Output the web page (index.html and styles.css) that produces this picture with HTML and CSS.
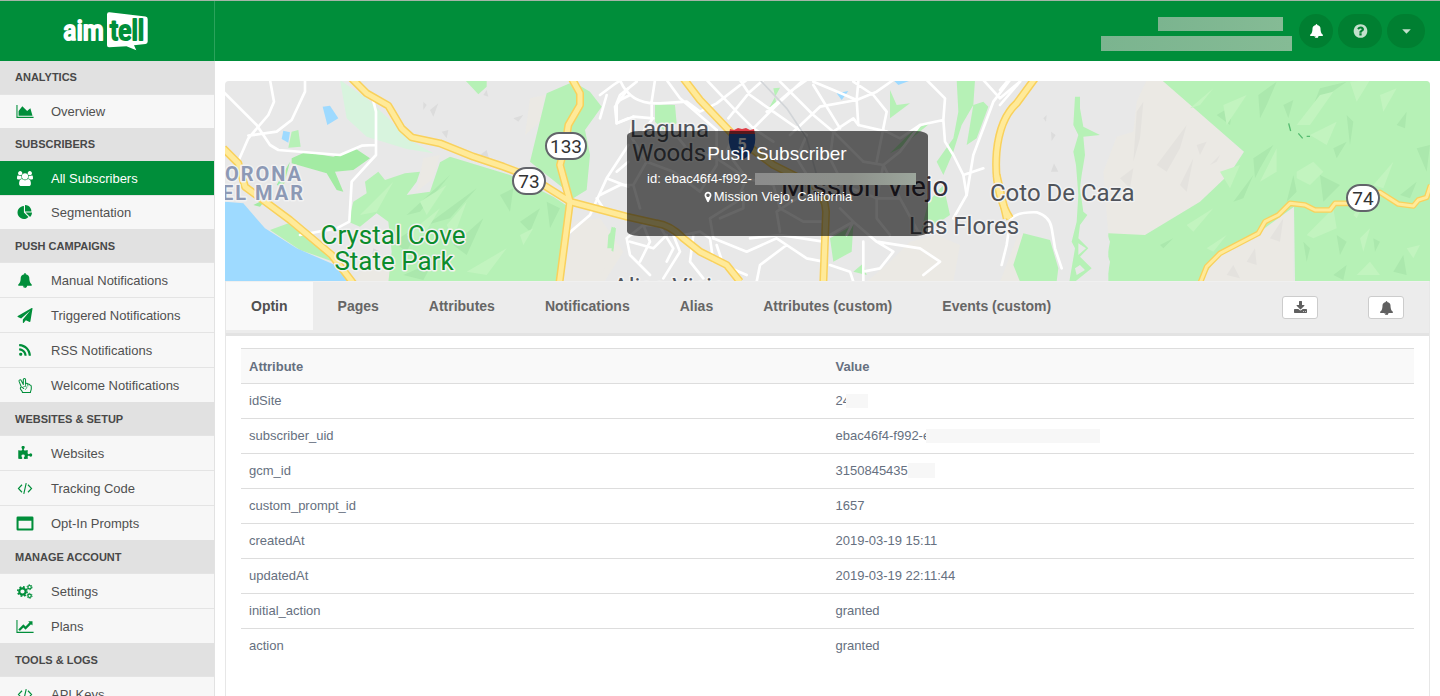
FILE: index.html
```html
<!DOCTYPE html>
<html lang="en">
<head>
<meta charset="utf-8">
<title>Aimtell - Push Subscriber</title>
<link rel="stylesheet" href="styles.css">
</head>
<body>
<svg class="sprite" aria-hidden="true">
  <symbol id="i-area" viewBox="0 0 2048 1792"><path d="M2048 1536v128h-2048v-1536h128v1408h1920zm-384-1024l256 896h-1664v-576l448-576 576 576z"/></symbol>
  <symbol id="i-users" viewBox="0 0 1920 1792"><path d="M593 896q-162 5-265 128h-134q-82 0-138-40.5t-56-118.5q0-353 124-353 6 0 43.5 21t97.5 42.5 119 21.5q67 0 133-23-5 37-5 66 0 139 81 256zm1071 637q0 120-73 189.5t-194 69.5h-874q-121 0-194-69.5t-73-189.5q0-53 3.5-103.5t14-109 26.5-108.5 43-97.5 62-81 85.5-53.5 111.5-20q10 0 43 21.5t73 48 107 48 135 21.5 135-21.5 107-48 73-48 43-21.5q61 0 111.5 20t85.5 53.5 62 81 43 97.5 26.5 108.5 14 109 3.5 103.5zm-1024-1277q0 106-75 181t-181 75-181-75-75-181 75-181 181-75 181 75 75 181zm704 384q0 159-112.5 271.5t-271.5 112.5-271.5-112.5-112.5-271.5 112.5-271.5 271.5-112.5 271.5 112.5 112.5 271.5zm576 225q0 78-56 118.5t-138 40.5h-134q-103-123-265-128 81-117 81-256 0-29-5-66 66 23 133 23 59 0 119-21.5t97.5-42.5 43.5-21q124 0 124 353zm-128-609q0 106-75 181t-181 75-181-75-75-181 75-181 181-75 181 75 75 181z"/></symbol>
  <symbol id="i-pie" viewBox="0 0 1792 1792"><path d="M768 890l546 546q-106 108-247.500 168t-298.500 60q-209 0-385.500-103t-279.500-279.500-103-385.500 103-385.500 279.500-279.500 385.500-103v762zm187 6h773q0 157-60 298.500t-168 247.500zm709-128h-768v-768q209 0 385.500 103t279.500 279.500 103 385.500z"/></symbol>
  <symbol id="i-bell" viewBox="0 0 1792 1792"><path d="M912 1696q0-16-16-16-59 0-101.500-42.500t-42.500-101.500q0-16-16-16t-16 16q0 73 51.500 124.500t124.500 51.500q16 0 16-16zm816-288q0 52-38 90t-90 38h-448q0 106-75 181t-181 75-181-75-75-181h-448q-52 0-90-38t-38-90q50-42 91-88t85-119.500 74.500-158.500 50-206 19.500-260q0-152 117-282.500t307-158.500q-8-19-8-39 0-40 28-68t68-28 68 28 28 68q0 20-8 39 190 28 307 158.500t117 282.500q0 139 19.500 260t50 206 74.500 158.500 85 119.500 91 88z"/></symbol>
  <symbol id="i-plane" viewBox="0 0 1792 1792"><path d="M1764 11q33 24 27 64l-256 1536q-5 29-32 45-14 8-31 8-11 0-24-5l-453-185-242 295q-18 23-49 23-13 0-22-4-19-7-30.500-23.500t-11.500-36.500v-349l864-1059-1069 925-395-162q-37-14-40-55-2-40 32-59l1664-960q15-9 32-9 20 0 36 11z"/></symbol>
  <symbol id="i-rss" viewBox="0 0 1792 1792"><path d="M576 1344q0 80-56 136t-136 56-136-56-56-136 56-136 136-56 136 56 56 136zm512 123q2 28-17 48-18 21-47 21h-135q-25 0-43-16.500t-20-41.500q-22-229-184.500-391.500t-391.500-184.500q-25-2-41.500-20t-16.500-43v-135q0-29 21-47 17-17 43-17h5q160 13 306 80.500t259 181.500q114 113 181.500 259t80.500 306zm512 2q2 27-18 47-18 20-46 20h-143q-26 0-44.500-17.500t-19.500-42.500q-12-215-101-408.500t-231.500-336-336-231.500-408.500-102q-25-1-42.500-19.500t-17.500-43.500v-143q0-28 20-46 18-18 44-18h3q262 13 501.500 120t425.500 294q187 186 294 425.500t120 501.500z"/></symbol>
  <symbol id="i-peace" viewBox="0 0 16 16"><g fill="none" stroke="currentColor" stroke-width="1.100" stroke-linejoin="round" stroke-linecap="round"><path d="M4 9.500 1.700 3.600C1.200 2 3.300 1.200 4 2.700L6.200 7V1.800c0-1.600 2.400-1.600 2.400 0v4.500c.8-1 2.200-.8 2.400.4 1-.5 2-.1 2.200.8 1 0 1.500.7 1.500 1.500v2.400c0 1.600-.9 2.400-.9 4H5.300c0-1.700-2.300-2.600-2.300-4.500 0-.9.300-1.400 1-1.400 1 0 1.700.9 2.600 1.700"/><path stroke-width=".8" d="M8.600 6.300v2M11 7v1.600M6.500 9.300c1.500-.7 3-.5 3.300.6.200.9-.8 1.400-1.300 2.300"/></g></symbol>
  <symbol id="i-puzzle" viewBox="0 0 1792 1792"><path d="M1755 1083q0 81-44.500 135t-123.500 54q-41 0-77.500-17.500t-59-38-56.500-38-71-17.500q-110 0-110 124 0 39 16 115t15 115v5q-22 0-33 1-34 3-97.500 11.500t-115.500 13.500-98 5q-61 0-103-26.500t-42-83.500q0-37 17.500-71t38-56.500 38-59 17.500-77.500q0-79-54-123.500t-135-44.500q-84 0-143 45.500t-59 127.500q0 43 15 83t33.500 64.500 33.500 53 15 50.500q0 45-46 89-37 35-117 35-95 0-245-24-9-2-27.500-4t-27.500-4l-13-2q-1 0-3-1-2 0-2-1v-1024q2 1 17.500 3.500t34 5 21.500 3.500q150 24 245 24 80 0 117-35 46-44 46-89 0-22-15-50.500t-33.500-53-33.500-64.500-15-83q0-82 59-127.500t144-45.500q80 0 134 44.500t54 123.500q0 41-17.500 77.500t-38 59-38 56.500-17.500 71q0 57 42 83.500t103 26.500q64 0 180-15t163-17v2q-1 2-3.500 17.500t-5 34-3.500 21.500q-24 150-24 245 0 80 35 117 44 46 89 46 22 0 50.500-15t53-33.500 64.500-33.500 83-15q82 0 127.500 59t45.500 143z"/></symbol>
  <symbol id="i-code" viewBox="0 0 16 16"><path fill="none" stroke="currentColor" stroke-width="1.200" d="M4.800 4 1 8l3.800 4M11.200 4 15 8l-3.800 4M9.300 2.200 6.700 13.800"/></symbol>
  <symbol id="i-window" viewBox="0 0 16 14"><path fill-rule="evenodd" d="M1.300.5h13.400A1.200 1.200 0 0 1 15.900 1.700v10.600a1.200 1.200 0 0 1-1.200 1.200H1.300A1.200 1.200 0 0 1 .1 12.300V1.700A1.200 1.200 0 0 1 1.300.5zM2 4.500V11.600h12V4.500z"/></symbol>
  <symbol id="i-cogs" viewBox="0 0 17 16"><g fill="none" stroke="currentColor"><circle cx="5.800" cy="8" r="3.400" stroke-width="2.300"/><circle cx="5.800" cy="8" r="5" stroke-width="1.700" stroke-dasharray="1.960 1.967"/><circle cx="13.400" cy="3.400" r="1.800" stroke-width="1.300"/><circle cx="13.400" cy="3.400" r="2.700" stroke-width="1" stroke-dasharray="1.400 1.427"/><circle cx="13.400" cy="12.600" r="1.800" stroke-width="1.300"/><circle cx="13.400" cy="12.600" r="2.700" stroke-width="1" stroke-dasharray="1.400 1.427"/></g></symbol>
  <symbol id="i-line" viewBox="0 0 2048 1792"><path d="M2048 1536v128h-2048v-1536h128v1408h1920zm-128-1248v435q0 21-19.500 29.500t-35.500-7.500l-121-121-633 633q-10 10-23 10t-23-10l-233-233-416 416-192-192 585-585q10-10 23-10t23 10l233 233 464-464-121-121q-16-16-7.500-35.500t29.500-19.500h435q14 0 23 9t9 23z"/></symbol>
  <symbol id="i-help" viewBox="0 0 1792 1792"><path d="M1024 1376v-192q0-14-9-23t-23-9h-192q-14 0-23 9t-9 23v192q0 14 9 23t23 9h192q14 0 23-9t9-23zm256-672q0-88-55.500-163t-138.500-116-170-41q-243 0-371 213-15 24 8 42l132 100q7 6 19 6 16 0 25-12 53-68 86-92 34-24 86-24 48 0 85.500 26t37.500 59q0 38-20 61t-68 45q-63 28-115.500 86.500t-52.500 125.500v36q0 14 9 23t23 9h192q14 0 23-9t9-23q0-19 21.500-49.500t54.500-49.500q32-18 49-28.500t46-35 44.500-48 28-60.500 12.500-81zm384 192q0 209-103 385.500t-279.500 279.500-385.500 103-385.500-103-279.500-279.500-103-385.500 103-385.500 279.500-279.500 385.500-103 385.500 103 279.500 279.500 103 385.500z"/></symbol>
  <symbol id="i-caret" viewBox="0 0 14 14"><path d="M3 5h8L7 9z"/></symbol>
  <symbol id="i-pin" viewBox="0 0 1792 1792"><path d="M1152 640q0-106-75-181t-181-75-181 75-75 181 75 181 181 75 181-75 75-181zm256 0q0 109-33 179l-364 774q-16 33-47.500 52t-67.500 19-67.500-19-46.500-52l-365-774q-33-70-33-179 0-212 150-362t362-150 362 150 150 362z"/></symbol>
  <symbol id="i-download" viewBox="0 0 1792 1792"><path d="M1344 1344q0-26-19-45t-45-19-45 19-19 45 19 45 45 19 45-19 19-45zm256 0q0-26-19-45t-45-19-45 19-19 45 19 45 45 19 45-19 19-45zm128-224v320q0 40-28 68t-68 28h-1472q-40 0-68-28t-28-68v-320q0-40 28-68t68-28h465l135 136q58 56 136 56t136-56l136-136h464q40 0 68 28t28 68zm-325-569q17 41-14 70l-448 448q-18 19-45 19t-45-19l-448-448q-31-29-14-70 17-39 59-39h256v-448q0-26 19-45t45-19h256q26 0 45 19t19 45v448h256q42 0 59 39z"/></symbol>
</svg>

<header class="topbar">
  <a class="brand" href="#" aria-label="aimtell">
    <svg class="logo" viewBox="0 0 90 44" aria-hidden="true">
      <path class="logo-bubble" d="M45 5.500Q45 3 47.500 3.300L83.500 7.500Q85.700 7.800 85.700 10V32.500Q85.700 34.800 83.500 35L72 36.300 74.300 41.200 64.500 37.200 47 38.200Q45 38.200 45 36.200Z"/>
      <text class="logo-aim" x="1" y="31">aim</text>
      <text class="logo-tell" x="48" y="31">tell</text>
    </svg>
  </a>
  <div class="account">
    <div class="account-lines"><span class="mask mask-name"></span><span class="mask mask-mail"></span></div>
    <button class="round round-bell" type="button" aria-label="Notifications"><svg class="icon"><use href="#i-bell"/></svg></button>
    <button class="round round-help" type="button" aria-label="Help"><svg class="icon"><use href="#i-help"/></svg></button>
    <button class="round round-menu" type="button" aria-label="Account menu"><svg class="icon"><use href="#i-caret"/></svg></button>
  </div>
</header>

<div class="shell">
  <nav class="sidebar">
    <section class="group compact">
      <h2>ANALYTICS</h2>
      <a href="#"><svg class="icon"><use href="#i-area"/></svg>Overview</a>
    </section>
    <section class="group compact">
      <h2>SUBSCRIBERS</h2>
      <a class="current" href="#"><svg class="icon"><use href="#i-users"/></svg>All Subscribers</a>
      <a href="#"><svg class="icon"><use href="#i-pie"/></svg>Segmentation</a>
    </section>
    <section class="group">
      <h2>PUSH CAMPAIGNS</h2>
      <a href="#"><svg class="icon"><use href="#i-bell"/></svg>Manual Notifications</a>
      <a href="#"><svg class="icon"><use href="#i-plane"/></svg>Triggered Notifications</a>
      <a href="#"><svg class="icon"><use href="#i-rss"/></svg>RSS Notifications</a>
      <a href="#"><svg class="icon"><use href="#i-peace"/></svg>Welcome Notifications</a>
    </section>
    <section class="group">
      <h2>WEBSITES &amp; SETUP</h2>
      <a href="#"><svg class="icon"><use href="#i-puzzle"/></svg>Websites</a>
      <a href="#"><svg class="icon"><use href="#i-code"/></svg>Tracking Code</a>
      <a href="#"><svg class="icon"><use href="#i-window"/></svg>Opt-In Prompts</a>
    </section>
    <section class="group">
      <h2>MANAGE ACCOUNT</h2>
      <a href="#"><svg class="icon"><use href="#i-cogs"/></svg>Settings</a>
      <a href="#"><svg class="icon"><use href="#i-line"/></svg>Plans</a>
    </section>
    <section class="group">
      <h2>TOOLS &amp; LOGS</h2>
      <a href="#"><svg class="icon"><use href="#i-code"/></svg>API Keys</a>
    </section>
  </nav>

  <main class="content">
    <div class="hero">
      <svg class="map" viewBox="0 0 1205 200" preserveAspectRatio="xMidYMid slice" aria-hidden="true">
        <defs>
          <g id="highways">
            <g transform="translate(-5 -6) scale(.333333)">
              <path d="M395 10 440 55 505 92 545 160 575 187 660 205 760 245 850 275 930 305 1050 380 1220 425 1310 445Q1350 450 1390 490L1440 530 1520 570 1560 620"/>
              <path d="M1055 10 1080 55V90L1045 150 1035 215 1020 270 1050 380 1018 625"/>
              <path d="M10 220 55 265 75 335 210 435 335 540 400 625"/>
            </g>
            <g transform="translate(375 -6) scale(.333333)">
              <path d="M250 10 300 75 400 180 520 270 640 330Q675 360 678 410L670 625"/>
              <path d="M1305 10 1250 85Q1200 130 1190 230 1180 350 1230 430"/>
              <path d="M1190 300 1220 430"/>
            </g>
          </g>
          <g id="route74"><path transform="translate(775 -6) scale(.333333)" d="M600 625 620 575 660 535 775 475 795 440 835 420 870 385 915 390 945 405H990L1005 385H1060L1140 352 1195 387 1240 393 1255 375 1280 367 1292 330"/></g>
        </defs>
        <rect class="land" width="1205" height="200"/>
        <!-- western coast -->
        <g transform="translate(-5 -6) scale(.333333)">
          <path class="hill" d="M430 570 520 560V620H410ZM1060 440 1140 430 1210 530 1150 625H1030ZM930 70 975 60 960 140 915 180ZM610 250 660 240 640 310 590 350Z"/>
          <path class="pale" d="M360 15 440 70 505 130 560 190 640 235 560 222 440 185 380 130Z"/>
          <path class="park" d="M660 262 690 245 870 300 1000 365 1045 395 1025 622H505L515 530 505 440 470 415 420 455 385 440 400 380 440 355 435 320 475 290 495 315 555 295 600 290 590 320 560 360 630 350Z"/>
          <path class="park" d="M980 55 1060 20 1110 50 1145 95 1095 165 1110 240 1100 345 1060 370 1030 340 930 260ZM735 15H800V35L775 58ZM150 465 205 445 260 485 340 560 240 525ZM215 170 235 165 242 215 205 218ZM1175 455 1188 460 1180 530 1160 520Z"/>
          <path class="dense" d="M215 250 255 232 340 245 405 220 450 250 400 285 345 290 370 350 350 345 320 295 215 265ZM170 330 210 260 190 335ZM100 390 140 370 120 395Z"/>
          <path class="facet-dark" d="M560 420 690 300 600 410ZM620 450 770 340 690 430ZM520 500 600 450 560 530ZM840 360 880 340 870 410ZM700 510 790 430 740 540ZM980 380 1020 400 990 460ZM550 600 640 560 610 615ZM900 440 960 400 930 470Z"/>
          <path class="facet-light" d="M420 420 520 320 470 410ZM560 480 660 400 600 500ZM680 450 740 380 700 490ZM740 590 860 520 800 600ZM900 480 940 460 910 510ZM600 380 680 330 620 420Z"/>
          <path class="shade" d="M610 80 620 90 610 105ZM630 105 655 85 640 125ZM665 170 685 165 680 190ZM790 60 800 45 805 65ZM780 240 800 225 810 262ZM880 130 910 120 895 140ZM460 520 480 530 455 550Z"/>
          <path class="water" d="M15 380 70 385 135 460 230 520 340 568 390 622H10ZM308 95 330 92 355 130 322 150ZM190 167 210 172 205 203 185 192Z"/>
          <g class="streets">
            <path d="M10 50 110 150 150 210 175 225 360 240 425 212 465 210M150 15 162 80 145 120 85 190 50 270M255 15V50L215 135 170 170 85 182M458 70 468 110V240L395 320 388 440 350 460 240 480M1040 480 1110 420 1160 310 1225 210M1160 310 1225 335M1225 40 1185 95 1190 145 1225 130"/>
            <path d="M1230 60 1200 75M1190 290 1225 260M1160 415 1130 370"/>
          </g>
        </g>
        <!-- central cities -->
        <g transform="translate(375 -6) scale(.333333)">
          <path class="hill" d="M930 500 1010 480 1080 510 1060 620H800L870 560ZM0 440 40 480 30 560 0 600Z"/>
          <path class="park" d="M165 88 225 90 230 145 190 165 165 140ZM520 40 540 38 500 112 530 90ZM870 45 890 90 930 85 870 130ZM1070 15H1125L1120 90 1085 150 1060 230 1030 300 1010 260 1060 190 1075 110ZM1120 90 1150 80 1165 95 1130 190 1100 210ZM995 140 900 220 870 235 940 165ZM690 490 760 450 755 530 700 560ZM985 380 1030 330 1050 420 960 480ZM25 480 45 455 40 520 22 520ZM760 590 790 565 800 600Z"/>
          <path class="water" d="M710 55 745 48 725 75ZM880 15H935L895 30Z"/>
          <g class="streets">
            <path d="M0 60 40 30 70 10M60 15Q90 90 180 85L260 80M50 85 60 60 110 20M50 85V145L100 125 160 130M165 15 155 80V135L130 170M200 15 240 70 350 165M260 80 300 110 350 85 440 15M320 15 410 110 460 160 520 200M385 130 450 50 490 15M420 15 450 60 520 110 620 180M460 160 530 90 610 15M500 110 570 50 620 15M540 20 640 120 700 170 790 260M570 180 660 95 770 75 830 50 880 15M770 75 775 20M770 75 775 150 860 170M640 20 700 45 770 75M760 20 820 60 860 110 850 160 830 260M980 15 1035 70 1030 135 960 150 900 230 850 270M1030 135 1035 200 1060 240 1090 300 1100 360"/>
            <path d="M1150 15 1200 70 1260 20M1230 15 1180 80 1120 240 1100 360 1060 430M1090 300 1150 280M860 170 900 190 960 150M100 125 90 180 140 260 220 290 300 350M220 170 260 220 350 250 440 310 520 330M300 350 350 270 350 165M400 180 380 230 440 310 410 380 330 430 340 490M520 330 540 400 610 440 670 440M620 180 590 250 640 330M700 170 690 250 730 330 830 370 900 370M790 260 850 270 900 370 960 480M450 490 540 480 670 500M140 260 100 330 120 400M0 360 60 330 100 330M20 60 0 130"/>
            <path d="M80 490 130 450 210 455 240 530 190 610M80 490 90 540 150 600M90 500 160 520 200 480M130 450 150 500 120 560M180 455 220 520 200 560M250 480 300 470 330 490 340 560M280 480 270 560 310 610M340 490 440 530 530 490 560 510 480 570 470 620M360 430 430 400 430 350M540 470 530 410 590 370M690 480 760 440 830 500 960 520M790 500V620M830 500 880 530 840 580 790 590M960 520 1020 560 970 600M690 570 750 590 760 620M560 510 620 550 670 560M350 510 370 570 440 600M640 30 720 160M700 170 760 130 775 150M720 400 760 440 740 480M850 270 830 370 830 430 870 480"/>
          </g>
          <path class="rail" d="M480 15 560 100 620 190 650 300"/>
        </g>
        <!-- eastern hills -->
        <g transform="translate(775 -6) scale(.333333)">
          <path class="hill" d="M440 15H490L730 230 690 295 600 380 435 480H325L310 290 350 185 400 170 410 80ZM600 620 660 535 780 470 880 395V620ZM50 490 75 470 60 620H0Z"/>
          <path class="park" d="M485 15H1295V620H885L882 395 780 470 660 535 600 620H325L325 475 435 480 600 380 690 295 732 230ZM70 475 150 495 175 580 170 620H60L40 570ZM225 65 240 65 240 100 250 155 300 180 250 185 255 240 245 300 240 340 250 410 262 420 240 450 235 490 265 520 240 545 275 580 225 620H208L225 520 215 500 230 440 235 360 228 270 220 230 235 180 220 150Z"/>
          <path class="land" d="M320 475 330 500 322 540 330 560 320 620H300V475ZM235 505 258 520 235 540ZM225 580 240 570 255 585 230 600Z"/>
          <path class="facet-dark" d="M775 60 830 20 800 90 780 130ZM760 250 820 210 780 280 765 310ZM850 90 880 75 865 130ZM1040 120 1060 140 1050 210ZM1190 150 1220 110 1215 160ZM1000 220 1040 200 1010 250ZM960 300 1020 330 970 380ZM1250 220 1290 210 1280 290ZM700 380 760 300 730 370ZM860 380 890 350 880 300ZM1120 490 1140 500 1125 530ZM1010 480 1040 500 1020 540ZM910 500 930 520 920 560ZM650 120 700 90 690 150ZM1200 360 1250 320 1230 370ZM480 510 520 490 490 520ZM960 40 1040 20 940 90ZM1180 590 1210 540 1220 600ZM1000 600 1040 570 1030 615Z"/>
          <path class="facet-light" d="M570 100 640 40 600 90ZM890 150 960 60 1000 50 930 150ZM930 180 1010 140 980 210ZM890 290 940 260 970 290 930 330 890 310ZM780 320 830 220 830 290ZM1060 420 1100 370 1070 430ZM920 480 1000 400 1010 460 940 490ZM1120 330 1180 260 1150 340ZM1080 490 1110 460 1090 530ZM1050 20 1110 15 1070 80ZM1140 60 1190 40 1150 110ZM660 290 720 270 690 340ZM560 450 640 400 580 470ZM620 520 680 480 640 530ZM1070 600 1110 560 1140 600ZM1220 520 1260 510 1240 550ZM670 90 740 60 680 150Z"/>
          <path class="shade-warm" d="M410 110 430 80 420 190 400 260ZM470 270 560 150 540 220 500 290ZM540 330 580 250 560 350ZM590 210 620 200 600 240ZM630 270 660 240 650 260ZM360 310 400 280 390 340ZM740 560 765 520 770 570ZM810 490 850 430 840 500ZM680 600 700 570 720 610Z"/>
          <path class="shade" d="M130 130 140 120 138 140ZM153 170 167 180 155 198ZM153 290 162 265 175 290Z"/>
          <path class="trail" d="M866 145 872 168M895 175 908 190M920 184H930"/>
          <path class="streets" d="M0 90 60 20M0 45 25 15M5 570 20 510 30 440Q40 410 110 412 150 425 155 460L165 520 185 580"/>
        </g>
        <use class="road-edge" href="#highways"/><use class="road-fill" href="#highways"/>
        <use class="minor-edge" href="#route74"/><use class="minor-fill" href="#route74"/>
        <g class="shield">
          <rect x="321" y="52" width="40" height="26" rx="13"/><text x="341" y="72">133</text>
          <rect x="288" y="87" width="32" height="26" rx="13"/><text x="304" y="107">73</text>
          <rect x="1122" y="104" width="32" height="26" rx="13"/><text x="1138" y="124">74</text>
        </g>
        <path class="inter-blue" d="M504 53H530Q532 72 517 79 502 72 504 53Z"/>
        <path class="inter-red" d="M505 48 509 49 513 47 517 48 521 47 525 49 529 48 530 53H504Z"/>
        <text class="inter-num" x="517" y="69">5</text>
        <g class="place">
          <text x="405" y="56">Laguna</text><text x="407" y="80">Woods</text>
          <text x="388" y="214">Aliso Viejo</text>
          <text x="765" y="120">Coto De Caza</text><text x="684" y="153">Las Flores</text>
        </g>
        <text class="place city" x="556" y="115">Mission Viejo</text>
        <g class="district"><text x="78" y="100">CORONA</text><text x="80" y="119">DEL MAR</text></g>
        <g class="parkname"><text x="168" y="163">Crystal Cove</text><text x="169" y="189">State Park</text></g>
      </svg>
      <div class="card">
        <h1>Push Subscriber</h1>
        <p class="uid">id: ebac46f4-f992-<span class="mask mask-uid"></span></p>
        <p><svg class="icon"><use href="#i-pin"/></svg>Mission Viejo, California</p>
      </div>
    </div>

    <div class="panel">
      <div class="tabs">
        <div class="tablist" role="tablist">
          <button type="button" role="tab" aria-selected="true">Optin</button>
          <button type="button" role="tab">Pages</button>
          <button type="button" role="tab">Attributes</button>
          <button type="button" role="tab">Notifications</button>
          <button type="button" role="tab">Alias</button>
          <button type="button" role="tab">Attributes (custom)</button>
          <button type="button" role="tab">Events (custom)</button>
        </div>
        <div class="tools">
          <button type="button" aria-label="Download"><svg class="icon"><use href="#i-download"/></svg></button>
          <button type="button" aria-label="Send notification"><svg class="icon"><use href="#i-bell"/></svg></button>
        </div>
      </div>
      <div class="panel-body">
        <table>
          <thead><tr><th scope="col">Attribute</th><th scope="col">Value</th></tr></thead>
          <tbody>
            <tr><td>idSite</td><td>24<span class="mask mask-site"></span></td></tr>
            <tr><td>subscriber_uid</td><td>ebac46f4-f992-e<span class="mask mask-sub"></span></td></tr>
            <tr><td>gcm_id</td><td>3150845435<span class="mask mask-gcm"></span></td></tr>
            <tr><td>custom_prompt_id</td><td>1657</td></tr>
            <tr><td>createdAt</td><td>2019-03-19 15:11</td></tr>
            <tr><td>updatedAt</td><td>2019-03-19 22:11:44</td></tr>
            <tr><td>initial_action</td><td>granted</td></tr>
            <tr><td>action</td><td>granted</td></tr>
          </tbody>
        </table>
      </div>
    </div>
  </main>
</div>
</body>
</html>
```
FILE: styles.css
```css
* { box-sizing: border-box; }

body {
  margin: 0;
  height: 100vh;
  display: flex;
  flex-direction: column;
  overflow: hidden;
  background: #fff;
  font: 13px/18px "Liberation Sans", Arial, sans-serif;
  color: #667080;
}

h1, h2, p { margin: 0; }
button { font: inherit; cursor: pointer; }
.sprite { display: none; }
.icon { width: 17px; height: 15px; fill: currentColor; flex: none; }
.mask { display: inline-block; }

/* Top bar */
.topbar {
  flex: none;
  display: flex;
  justify-content: space-between;
  height: 61px;
  border-top: 1px solid #a5b5a8;
  background: #008e3a;
}
.brand {
  display: flex;
  justify-content: center;
  align-items: center;
  width: 215px;
  border-right: 1px solid #2aa35b;
}
.logo { width: 90px; height: 44px; }
.logo-bubble, .logo-aim { fill: #fff; }
.logo-aim, .logo-tell {
  font: normal 28px "Liberation Sans Narrow", "Roboto Condensed", "Liberation Sans", sans-serif;
  stroke-width: 2;
  stroke-linejoin: round;
}
.logo-aim { stroke: #fff; }
.logo-tell { fill: #008e3a; stroke: #008e3a; }
.account { display: flex; align-items: center; gap: 5px; padding-right: 15px; }
.account-lines {
  display: flex;
  flex-direction: column;
  align-items: flex-end;
  gap: 5px;
  margin-right: 2px;
  padding-top: 6px;
}
.account-lines .mask { background: linear-gradient(90deg, #7bb48f, #85bb95); }
.mask-name { width: 125px; height: 14px; margin-right: 9px; }
.mask-mail { width: 191px; height: 15px; }
.round {
  display: flex;
  align-items: center;
  justify-content: center;
  height: 34px;
  padding: 0;
  border: 0;
  border-radius: 17px;
  background: #007f31;
  color: #c3e0cd;
}
.round-bell { width: 34px; color: #fff; }
.round-bell .icon { height: 14px; }
.round-help { width: 44px; }
.round-help .icon { height: 16px; }
.round-menu { width: 38px; }

/* Sidebar */
.shell { flex: 1; min-height: 0; display: flex; }
.sidebar {
  flex: none;
  width: 215px;
  overflow: hidden;
  border-right: 1px solid #e2e2e2;
  background: #f7f7f7;
}
.group h2 {
  height: 33px;
  padding: 0 15px;
  margin-right: -1px;
  background: #e1e1e1;
  color: #484848;
  font-size: 11px;
  line-height: 34px;
}
.group a {
  display: flex;
  align-items: center;
  gap: 17px;
  height: 35px;
  padding: 1px 16px 0;
  border-top: 1px solid #e4e4e4;
  color: #505050;
  text-decoration: none;
}
.group a .icon { color: #008e3a; width: 18px; }
.compact a { height: 34px; padding-top: 0; }
.compact h2 { line-height: 33px; }
.group a.current { margin-right: -1px; background: #008e3a; border-color: #008e3a; color: #fff; }
.group a.current .icon { color: #fff; }

/* Map */
.content { flex: 1; min-width: 0; display: flex; flex-direction: column; padding: 20px 10px 0; }
.hero { position: relative; flex: none; height: 200px; }
.map {
  display: block;
  width: 100%;
  height: 200px;
  border-radius: 4px 4px 0 0;
  font-family: Roboto, sans-serif;
}
.land { fill: #e8e8e8; }
.hill { fill: #ebe9e4; }
.park { fill: #b6f1b6; }
.pale { fill: #d8f4de; }
.dense { fill: #a3eba3; }
.water { fill: #9edaff; }
.facet-dark { fill: #abe8ad; }
.facet-light { fill: #c2f4bf; }
.shade { fill: #dcdcdc; }
.shade-warm { fill: #e4e2de; }
.streets { fill: none; stroke: #fff; stroke-width: 8; stroke-linejoin: round; stroke-linecap: round; }
.rail { fill: none; stroke: #d2d5d8; stroke-width: 5; }
.trail { fill: none; stroke: #56bb70; stroke-width: 4; }
.road-edge, .road-fill, .minor-edge, .minor-fill { fill: none; stroke-linejoin: round; }
.road-edge { stroke: #f9d15c; stroke-width: 24; }
.road-fill { stroke: #ffea99; stroke-width: 15; }
.minor-edge { stroke: #f9d15c; stroke-width: 17; }
.minor-fill { stroke: #ffea99; stroke-width: 9; }
.shield rect { fill: #fff; stroke: #62646a; stroke-width: 2; }
.shield text { fill: #333; font-size: 19px; text-anchor: middle; }
.inter-blue { fill: #285eb4; }
.inter-red { fill: #df3d46; }
.inter-num { fill: #fff; font-size: 16px; font-weight: bold; text-anchor: middle; }
.place, .district, .parkname { stroke: #f2f2f2; stroke-width: 3; stroke-linejoin: round; paint-order: stroke; }
.place { fill: #50545b; font-size: 24px; }
.city { fill: #352f3b; font-size: 28px; }
.district { fill: #8d99b5; font-size: 20px; font-weight: bold; letter-spacing: 2px; text-anchor: end; }
.parkname { fill: #0c8c2c; font-size: 26px; text-anchor: middle; }

.card {
  position: absolute;
  top: 50px;
  left: calc(50% - 201px);
  width: 301px;
  height: 105px;
  padding-top: 12px;
  border-radius: 12px / 5px;
  background: rgba(0, 0, 0, 0.6);
  color: #fff;
  text-align: center;
}
.card h1 { padding-bottom: 5px; font-size: 19px; font-weight: normal; line-height: 22px; }
.card .icon { width: 12px; height: 14px; vertical-align: -3px; }
.uid { display: flex; align-items: center; justify-content: center; padding-left: 9px; }
.mask-uid { width: 161px; height: 12px; margin-left: 3px; background: linear-gradient(90deg, #8c8c8c, #8d918b 60%, #9ca69c); }

/* Subscriber panel */
.panel { flex: 1; border: 1px solid #e7e7e7; border-width: 0 1px; }
.tabs {
  display: flex;
  justify-content: space-between;
  height: 55px;
  border-top: 1px solid #f0f0f0;
  border-bottom: 3px solid #e3e3e3;
  background: #ececec;
}
.tablist { display: flex; }
.tablist button {
  height: 48px;
  padding: 0 25px;
  border: 0;
  background: none;
  color: #666;
  font-size: 14px;
  font-weight: bold;
}
.tablist [aria-selected="true"] { background: #f9f9f9; color: #505050; }
.tools { display: flex; gap: 50px; padding: 14px 25px 0 0; }
.tools button {
  display: flex;
  align-items: center;
  justify-content: center;
  width: 36px;
  height: 23px;
  padding: 0;
  border: 1px solid #ccc;
  border-radius: 3px;
  background: #fff;
  color: #606060;
}
.tools .icon { height: 14px; }
.panel-body { padding: 12px 15px; }
table { width: 100%; border-collapse: collapse; table-layout: fixed; }
th, td { height: 35px; padding: 0 8px; border-top: 1px solid #ddd; text-align: left; }
th { padding-top: 2px; background: #f9f9f9; }
td .mask { vertical-align: -3px; background: #f7f7f7; }
.mask-site { width: 22px; height: 14px; margin-left: -4px; }
.mask-sub { width: 174px; height: 14px; margin-left: -4px; }
.mask-gcm { width: 27px; height: 15px; }
```
